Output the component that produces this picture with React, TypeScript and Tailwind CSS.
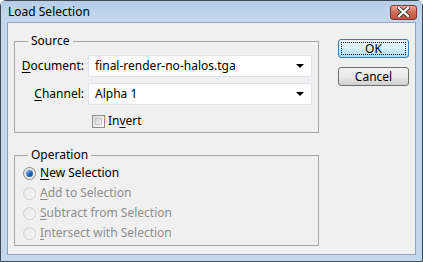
const font = { fontFamily: '"Noto Sans", "Open Sans", sans-serif' };

function U({ children }: { children: string }) {
  return <span className="underline underline-offset-2">{children}</span>;
}

function Combo({ value }: { value: string }) {
  return (
    <div className="flex items-center justify-between w-[224px] h-[22px] bg-white border border-[#dde3ea] rounded-[2px] pl-[6px] pr-[7px]">
      <span className="text-[12px] text-black">{value}</span>
      <svg width="8" height="4" viewBox="0 0 8 4">
        <polygon points="0,0 8,0 4,4" fill="#000" />
      </svg>
    </div>
  );
}

function Radio({ label, ul, checked, disabled }: { label: string; ul: string; checked?: boolean; disabled?: boolean }) {
  const rest = label.slice(ul.length);
  return (
    <div className="flex items-center h-[20px]">
      <div
        className={
          "w-[13px] h-[13px] rounded-full border flex items-center justify-center " +
          (disabled
            ? "border-[#cfcfcf] bg-gradient-to-br from-[#e6e6e6] to-[#f8f8f8]"
            : "border-[#8a8a8a] bg-gradient-to-br from-[#dcdcdc] to-[#ffffff]")
        }
      >
        {checked && (
          <div className="w-[7px] h-[7px] rounded-full bg-gradient-to-br from-[#9fd1ff] via-[#2a6fc0] to-[#0d3f86]" />
        )}
      </div>
      <span className={"ml-[4px] text-[12px] " + (disabled ? "text-[#8d8d8d]" : "text-black")}>
        <U>{ul}</U>
        {rest}
      </span>
    </div>
  );
}

export default function App() {
  return (
    <div style={font} className="w-[423px] h-[262px] overflow-hidden">
      <div className="w-[423px] h-[262px] border border-[#3f4a58] rounded-t-[6px] bg-[#c2d6ee] flex flex-col px-[6px] pb-[6px]">
        {/* title bar */}
        <div className="h-[21px] flex items-center justify-between bg-gradient-to-b from-[#b7cde8] to-[#c6d9ef] -mx-[6px] px-[6px]">
          <span className="text-[12px] text-black pl-[1px]">Load Selection</span>
          <div className="mr-[-1px] mt-[1px] w-[27px] h-[15px] rounded-[3px] border border-[#7d3a30] bg-gradient-to-b from-[#e7a896] via-[#d26b55] to-[#c2513f] flex items-center justify-center">
            <svg width="13" height="10" viewBox="0 0 13 10">
              <path d="M2 1 L11 9 M11 1 L2 9" stroke="#3a3a3a" strokeWidth="4" strokeLinecap="square" />
              <path d="M2 1 L11 9 M11 1 L2 9" stroke="#fff" strokeWidth="2.2" strokeLinecap="square" />
            </svg>
          </div>
        </div>
        {/* client */}
        <div className="flex-1 border border-[#8fa4bf] bg-[#f0f0f0] flex">
          <div className="flex flex-col pl-[6px]">
            {/* Source */}
            <div className="relative mt-[18px] w-[305px] h-[92px] border border-[#a6a6a6]">
              <span className="absolute left-[13px] -top-[9px] px-[3px] bg-[#f0f0f0] text-[12px] leading-[16px] text-black">Source</span>
              <div className="flex flex-col pt-[13px]">
                <div className="flex items-center">
                  <span className="w-[69px] text-right text-[12px] text-black">
                    <U>D</U>ocument:
                  </span>
                  <div className="ml-[4px]">
                    <Combo value="final-render-no-halos.tga" />
                  </div>
                </div>
                <div className="flex items-center mt-[6px]">
                  <span className="w-[69px] text-right text-[12px] text-black">
                    <U>C</U>hannel:
                  </span>
                  <div className="ml-[4px]">
                    <Combo value="Alpha 1" />
                  </div>
                </div>
                <div className="flex items-center mt-[7px] ml-[77px]">
                  <div className="w-[13px] h-[13px] border border-[#8e8f8f] bg-gradient-to-br from-[#dcdcdc] to-[#fbfbfb] p-[2px]">
                    <div className="w-full h-full border border-[#c5c5c5] bg-gradient-to-br from-[#d8d8d8] to-[#f4f4f4]" />
                  </div>
                  <span className="ml-[3px] text-[12px] text-black">
                    In<U>v</U>ert
                  </span>
                </div>
              </div>
            </div>
            {/* Operation */}
            <div className="relative mt-[22px] w-[305px] h-[91px] border border-[#a6a6a6]">
              <span className="absolute left-[13px] -top-[9px] px-[3px] bg-[#f0f0f0] text-[12px] leading-[16px] text-black">Operation</span>
              <div className="flex flex-col pt-[7px] pl-[8px]">
                <Radio label="New Selection" ul="N" checked />
                <Radio label="Add to Selection" ul="A" disabled />
                <Radio label="Subtract from Selection" ul="S" disabled />
                <Radio label="Intersect with Selection" ul="I" disabled />
              </div>
            </div>
          </div>
          {/* buttons */}
          <div className="flex flex-col ml-[19px] mt-[16px] gap-[9px]">
            <div className="w-[71px] h-[19px] rounded-[3px] border border-[#3c7fb1] bg-gradient-to-b from-[#eaf6fd] via-[#d9f0fc] to-[#a7d9f5] p-[2px]">
              <div className="w-full h-full border border-dotted border-black flex items-center justify-center text-[12px] leading-none text-black">
                OK
              </div>
            </div>
            <div className="w-[71px] h-[19px] rounded-[3px] border border-[#707070] bg-gradient-to-b from-[#f2f2f2] via-[#ebebeb] to-[#cfcfcf] flex items-center justify-center text-[12px] leading-none text-black">
              Cancel
            </div>
          </div>
        </div>
      </div>
    </div>
  );
}
